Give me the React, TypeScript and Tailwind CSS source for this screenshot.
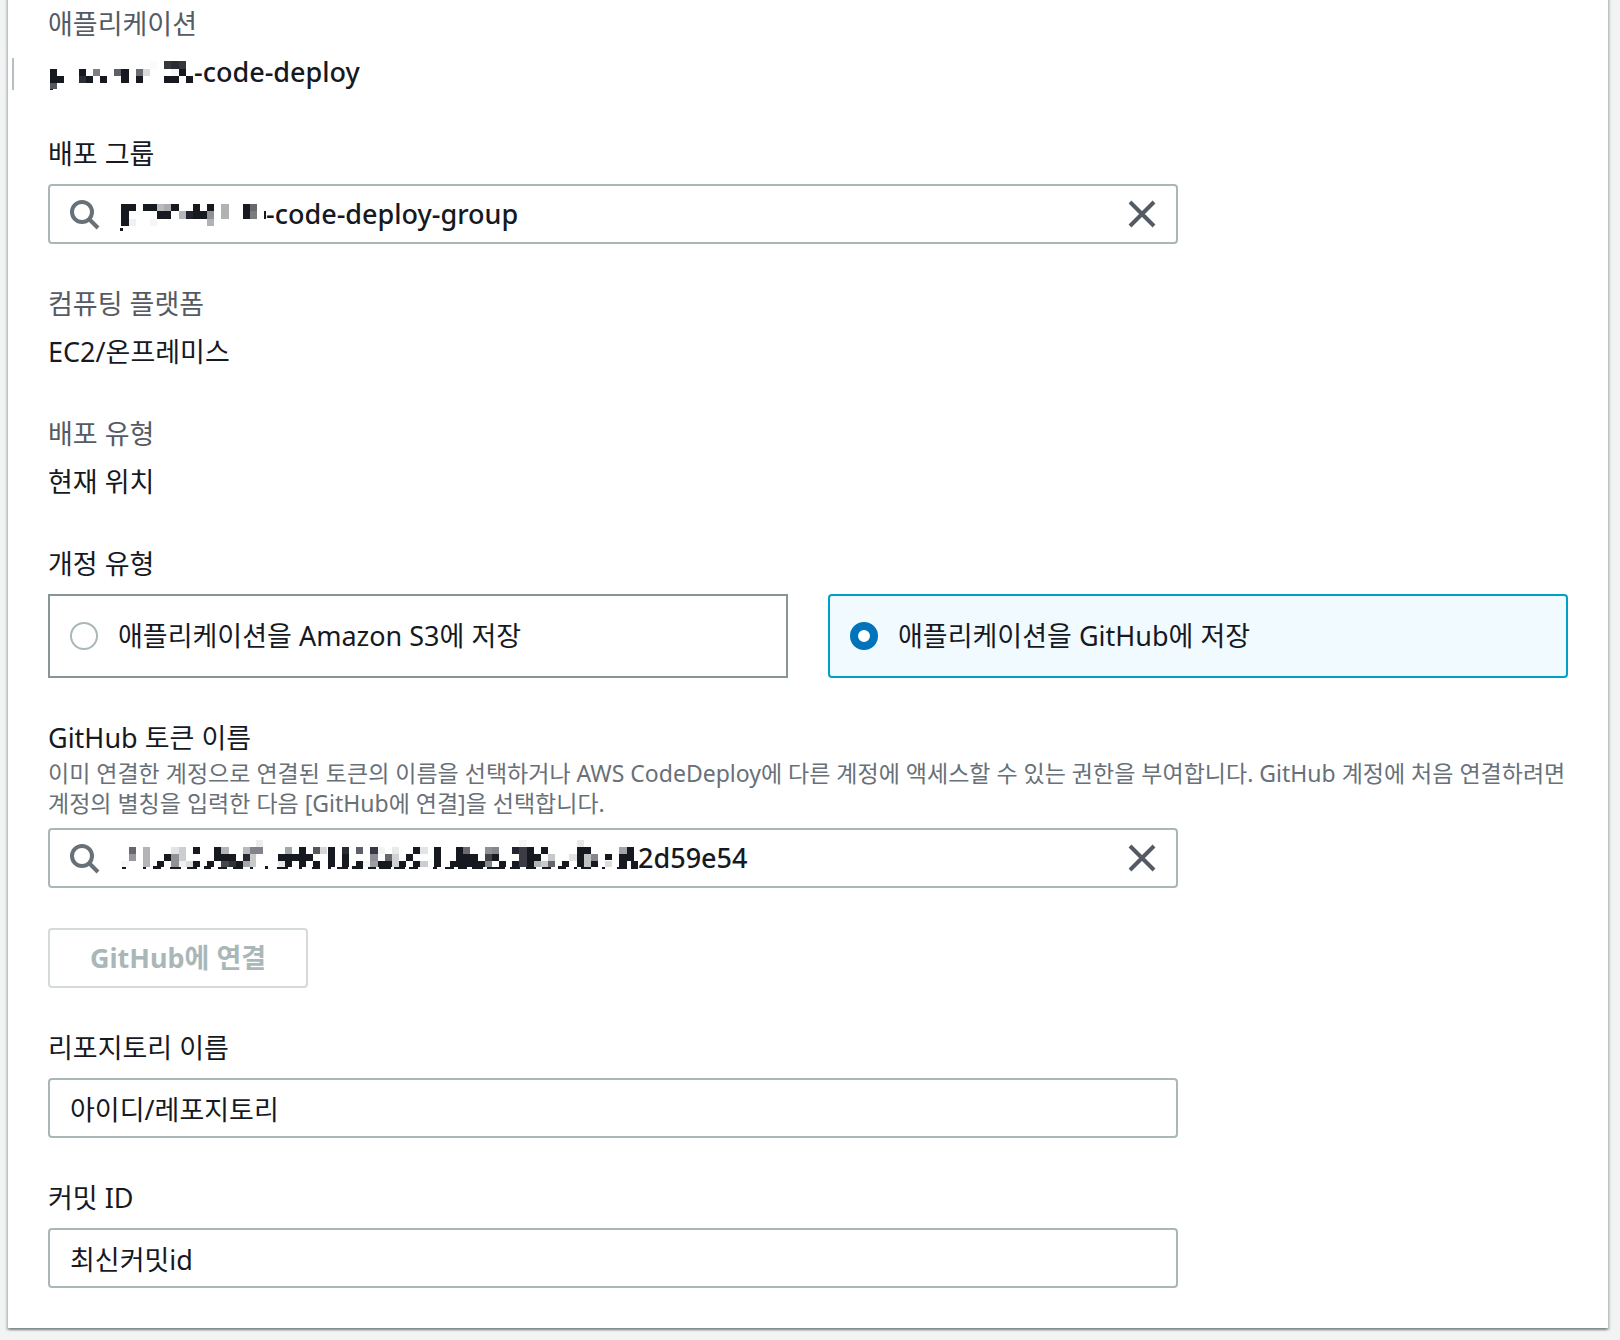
import { useState } from "react";
import type { ReactNode } from "react";

type Cell = [number, number, number, number, string];

const INK = "#16191f";

const APP_CELLS: Cell[] = [
  [6, 24, 21, 42, INK], [27, 45, 21, 21, INK], [6, 66, 21, 18, "#55585e"], [6, 84, 9, 3, INK],
  [93, 24, 21, 21, INK], [93, 45, 21, 21, "#2b2e34"], [114, 45, 21, 21, INK], [135, 24, 21, 21, "#7d7f83"], [156, 45, 21, 21, INK],
  [198, 24, 21, 21, "#5c5f64"], [219, 24, 24, 42, INK], [264, 24, 21, 21, "#6b6d72"], [264, 45, 21, 21, INK], [285, 24, 21, 21, "#dadbdc"], [306, 0, 21, 24, "#fafafa"],
  [348, 0, 21, 24, "#34373c"], [369, 0, 24, 24, "#282b31"], [393, 0, 21, 24, "#34373c"], [369, 24, 24, 21, "#f6f6f6"], [393, 24, 21, 21, INK],
  [348, 45, 45, 21, INK], [414, 45, 21, 21, INK],
];

const GROUP_CELLS: Cell[] = [
  [3, 0, 45, 21, INK], [3, 21, 24, 45, INK], [27, 45, 21, 21, "#f1f1f1"], [0, 72, 9, 8, INK],
  [69, 0, 42, 21, INK], [111, 0, 21, 21, "#b9bbbd"], [132, 0, 21, 21, "#abacaf"], [153, 0, 24, 21, INK], [111, 21, 42, 24, INK], [90, 45, 21, 21, "#f6f6f6"],
  [177, 21, 21, 24, "#b5b6b8"], [198, 21, 21, 24, "#22252e"], [219, 0, 21, 45, INK], [240, 21, 21, 24, INK], [261, 0, 21, 21, INK], [261, 21, 21, 24, "#8f9196"], [261, 45, 21, 21, "#b1b2b4"],
  [303, 0, 24, 45, "#b1b2b4"], [369, 0, 21, 45, INK], [390, 0, 21, 21, "#66686d"], [390, 21, 21, 24, "#7a7c80"],
  [432, 21, 8, 24, INK], [440, 36, 4, 9, INK],
];

const TOKEN_HEAD: Cell[] = [
  [27, 21, 21, 21, "#66686d"], [27, 42, 21, 21, "#96989b"], [3, 63, 24, 18, "#f6f6f6"], [6, 81, 11, 6, INK],
  [69, 21, 21, 60, "#b3b4b6"], [69, 81, 9, 6, INK],
  [111, 63, 21, 18, INK], [100, 79, 22, 7, INK], [132, 42, 21, 21, INK], [153, 21, 24, 21, "#e2e4e4"], [153, 42, 24, 39, "#919296"], [177, 21, 21, 42, "#cdced0"], [177, 63, 21, 18, "#f0f0f0"], [152, 81, 33, 6, INK],
  [219, 21, 21, 21, INK], [198, 63, 21, 18, "#dcdddd"], [219, 63, 21, 18, INK], [203, 81, 30, 6, INK],
  [282, 21, 21, 42, INK], [303, 21, 24, 21, "#b4b5b7"], [303, 42, 45, 21, INK], [261, 63, 21, 18, INK], [252, 79, 22, 7, INK], [303, 63, 24, 18, "#44464c"], [327, 63, 21, 18, "#303238"], [348, 63, 21, 18, INK],
  [296, 81, 26, 6, INK], [340, 81, 30, 6, INK], [369, 21, 21, 21, "#b9babc"], [369, 42, 21, 21, "#252832"], [369, 63, 21, 18, "#a6a7a9"], [390, 21, 42, 21, "#828388"], [390, 42, 21, 39, "#c8c9ca"], [411, 0, 21, 21, "#ededed"], [393, 81, 9, 6, INK], [438, 79, 9, 7, INK],
  [498, 21, 21, 21, "#a5a6a8"], [477, 42, 63, 21, INK], [498, 63, 21, 18, INK], [477, 63, 21, 18, "#e7e7e7"], [474, 81, 32, 6, INK], [540, 21, 21, 60, INK], [561, 42, 21, 21, INK], [582, 21, 21, 21, "#55575c"], [603, 21, 21, 21, "#d6d7d8"], [582, 63, 21, 18, INK], [538, 81, 10, 6, INK], [578, 81, 24, 6, INK],
  [627, 21, 21, 60, INK], [625, 81, 10, 6, INK], [669, 21, 21, 21, "#292c32"], [669, 42, 21, 39, INK], [655, 81, 32, 6, INK],
  [711, 21, 21, 21, "#5d6069"], [711, 63, 21, 18, INK], [700, 79, 32, 8, INK], [753, 21, 24, 21, "#363944"], [777, 21, 21, 21, "#f4f4f4"], [753, 42, 24, 21, "#8d8f94"], [732, 63, 21, 18, "#f4f4f4"], [753, 63, 24, 18, "#9d9ea1"], [777, 63, 21, 18, INK], [748, 81, 24, 6, INK], [784, 81, 32, 6, INK],
];

const TOKEN_TAIL: Cell[] = [
  [18, 21, 21, 21, "#66686d"], [39, 0, 21, 21, "#e8e9e9"], [39, 21, 21, 39, "#d0d1d2"], [18, 42, 21, 18, INK], [0, 60, 32, 6, INK], [60, 42, 21, 18, INK], [46, 60, 32, 6, INK], [81, 21, 21, 21, INK], [102, 0, 21, 21, INK], [123, 0, 24, 21, "#e3e4e4"], [102, 42, 21, 18, INK], [123, 42, 24, 18, "#cccdce"], [90, 60, 26, 6, INK],
  [165, 0, 22, 60, INK], [163, 60, 12, 6, INK],
  [231, 0, 21, 60, INK], [213, 42, 18, 18, INK], [200, 59, 26, 7, INK], [252, 0, 21, 21, "#6a6c72"], [252, 21, 45, 39, INK], [297, 42, 21, 18, INK], [238, 60, 26, 6, INK], [280, 60, 32, 6, INK],
  [318, 0, 21, 21, "#8f9195"], [339, 0, 21, 21, "#85878c"], [318, 21, 21, 21, "#404248"], [339, 21, 21, 21, INK], [318, 42, 21, 18, "#85878c"], [360, 42, 21, 18, INK], [324, 60, 30, 6, INK], [350, 60, 28, 6, INK],
  [402, 0, 21, 21, "#22242f"], [402, 42, 21, 18, INK], [423, 0, 24, 60, "#3c3d44"], [423, -21, 24, 21, "#f6f6f6"], [447, 0, 21, 60, INK], [394, 60, 32, 6, INK], [468, 21, 21, 21, INK], [489, 0, 21, 21, INK], [468, 42, 21, 18, "#b4b5b7"], [444, 60, 30, 6, INK], [489, 42, 21, 18, "#c8c9ca"], [510, 21, 21, 21, "#c8c9ca"], [510, 42, 21, 18, "#66686d"], [491, 60, 26, 6, INK],
  [552, 42, 21, 18, INK], [538, 58, 26, 8, INK], [573, 21, 24, 21, "#e2e3e3"], [597, -21, 21, 21, "#e8e8e8"], [597, 0, 42, 21, INK], [597, 21, 21, 39, INK], [618, 21, 21, 39, "#c0c1c3"], [639, 21, 21, 21, "#85878c"], [639, 42, 21, 18, INK], [588, 60, 8, 6, INK], [608, 60, 30, 6, INK],
  [681, 21, 21, 18, INK], [681, 42, 21, 18, "#dcdddd"], [672, 60, 10, 6, INK], [723, 0, 24, 21, "#a3a4a7"], [723, 21, 24, 39, INK], [747, 0, 21, 42, INK], [758, 42, 22, 24, INK], [718, 60, 28, 6, INK],
];

const TOKEN_CELLS: Cell[] = [
  ...TOKEN_HEAD,
  ...TOKEN_TAIL.map(([x, y, w, h, fill]): Cell => [x + 780, y + 21, w, h, fill]),
];

function Mosaic({ cells, className, viewBox }: { cells: Cell[]; className: string; viewBox: string }) {
  return (
    <svg className={className} viewBox={viewBox} shapeRendering="crispEdges" aria-hidden="true">
      {cells.map(([x, y, w, h, fill], i) => (
        <rect key={i} x={x} y={y} width={w} height={h} fill={fill} />
      ))}
    </svg>
  );
}

function SearchIcon() {
  return (
    <svg className="size-8 shrink-0" viewBox="0 0 32 32" fill="none" stroke="#687078" strokeWidth="4" aria-hidden="true">
      <circle cx="12" cy="14" r="10" />
      <path d="M19 21l9 9" />
    </svg>
  );
}

function CloseIcon() {
  return (
    <svg className="size-8" viewBox="0 0 32 32" fill="none" stroke="#545b64" strokeWidth="4" aria-hidden="true">
      <path d="M4 4l24 24M28 4L4 28" />
    </svg>
  );
}

function Pair({ label, children }: { label: string; children: ReactNode }) {
  return (
    <div>
      <dt className="mb-1.5 leading-10 text-[#545b64]">{label}</dt>
      <dd className="relative flex items-center">{children}</dd>
    </div>
  );
}

function SearchBox({ id, initial, mosaic }: { id: string; initial: string; mosaic: ReactNode }) {
  const [value, setValue] = useState(initial);
  return (
    <div className="flex h-15 w-[calc(75%-10px)] items-center rounded border-2 border-[#aab7b8] bg-white pr-[18px] pl-5">
      <SearchIcon />
      <div className="ml-[18px] flex min-w-0 flex-1 items-center">
        {mosaic}
        <input
          id={id}
          className="min-w-0 flex-1 bg-transparent font-medium outline-none"
          value={value}
          onChange={(e) => setValue(e.target.value)}
        />
      </div>
      <button type="button" aria-label="지우기" onClick={() => setValue("")}>
        <CloseIcon />
      </button>
    </div>
  );
}

function TextField({ id, label, initial }: { id: string; label: string; initial: string }) {
  return (
    <div>
      <label htmlFor={id} className="mb-2.5 block leading-10">{label}</label>
      <input
        id={id}
        defaultValue={initial}
        className="block h-15 w-[calc(75%-10px)] rounded border-2 border-[#aab7b8] bg-white px-5 outline-none"
      />
    </div>
  );
}

function Tile({ label, checked, onSelect }: { label: string; checked: boolean; onSelect: () => void }) {
  return (
    <label
      className={
        checked
          ? "flex h-21 items-center gap-5 rounded border-2 border-[#00a1c9] bg-[#f1faff] px-5"
          : "flex h-21 items-center gap-5 border-2 border-[#879596] bg-white px-5"
      }
    >
      <input
        type="radio"
        name="revision"
        checked={checked}
        onChange={onSelect}
        className="size-7 shrink-0 appearance-none rounded-full border-2 border-[#aab7b8] bg-white checked:border-8 checked:border-[#0073bb]"
      />
      <span>{label}</span>
    </label>
  );
}

export default function App() {
  const [revision, setRevision] = useState("github");
  return (
    <main className="min-h-screen overflow-hidden bg-[#f2f3f3] pr-3 pb-3 pl-2 font-['Noto_Sans','Noto_Sans_CJK_KR',sans-serif] text-[27px] leading-11 text-[#16191f]">
      <form
        className="-mt-2 flex flex-col gap-10 bg-white px-10 pt-3 pb-10 shadow-[0_2px_2px_0_rgba(0,28,36,0.3),2px_2px_2px_0_rgba(0,28,36,0.15),-2px_2px_2px_0_rgba(0,28,36,0.15)]"
        onSubmit={(e) => e.preventDefault()}
      >
        <dl>
          <Pair label="애플리케이션">
            <span className="absolute top-2 -left-9 h-8 w-0.5 bg-[#b9bec2]" />
            <Mosaic cells={APP_CELLS} viewBox="0 -24 438 114" className="h-[38px] w-[146px]" />
            <span className="font-medium">-code-deploy</span>
          </Pair>
        </dl>

        <div>
          <label htmlFor="group" className="mb-2.5 block leading-10">배포 그룹</label>
          <SearchBox
            id="group"
            initial="-code-deploy-group"
            mosaic={<Mosaic cells={GROUP_CELLS} viewBox="0 -24 438 108" className="h-9 w-[146px]" />}
          />
        </div>

        <dl className="flex flex-col gap-10">
          <Pair label="컴퓨팅 플랫폼">EC2/온프레미스</Pair>
          <Pair label="배포 유형">현재 위치</Pair>
        </dl>

        <fieldset>
          <legend className="mb-2.5 leading-10">개정 유형</legend>
          <div className="grid grid-cols-2 gap-10">
            <Tile label="애플리케이션을 Amazon S3에 저장" checked={revision === "s3"} onSelect={() => setRevision("s3")} />
            <Tile label="애플리케이션을 GitHub에 저장" checked={revision === "github"} onSelect={() => setRevision("github")} />
          </div>
        </fieldset>

        <div>
          <label htmlFor="token" className="block leading-10">GitHub 토큰 이름</label>
          <p className="mb-2.5 text-[23px] leading-[30px] text-[#687078]">
            이미 연결한 계정으로 연결된 토큰의 이름을 선택하거나 AWS CodeDeploy에 다른 계정에 액세스할 수 있는 권한을 부여합니다. GitHub 계정에 처음 연결하려면 계정의 별칭을 입력한 다음 [GitHub에 연결]을 선택합니다.
          </p>
          <SearchBox
            id="token"
            initial="2d59e54"
            mosaic={<Mosaic cells={TOKEN_CELLS} viewBox="0 0 1560 108" className="h-9 w-[518px]" />}
          />
        </div>

        <button
          type="button"
          disabled
          className="h-15 self-start rounded border-2 border-[#d5dbdb] bg-white px-10 font-bold text-[#aab7b8]"
        >
          GitHub에 연결
        </button>

        <TextField id="repo" label="리포지토리 이름" initial="아이디/레포지토리" />
        <TextField id="commit" label="커밋 ID" initial="최신커밋id" />
      </form>
    </main>
  );
}
